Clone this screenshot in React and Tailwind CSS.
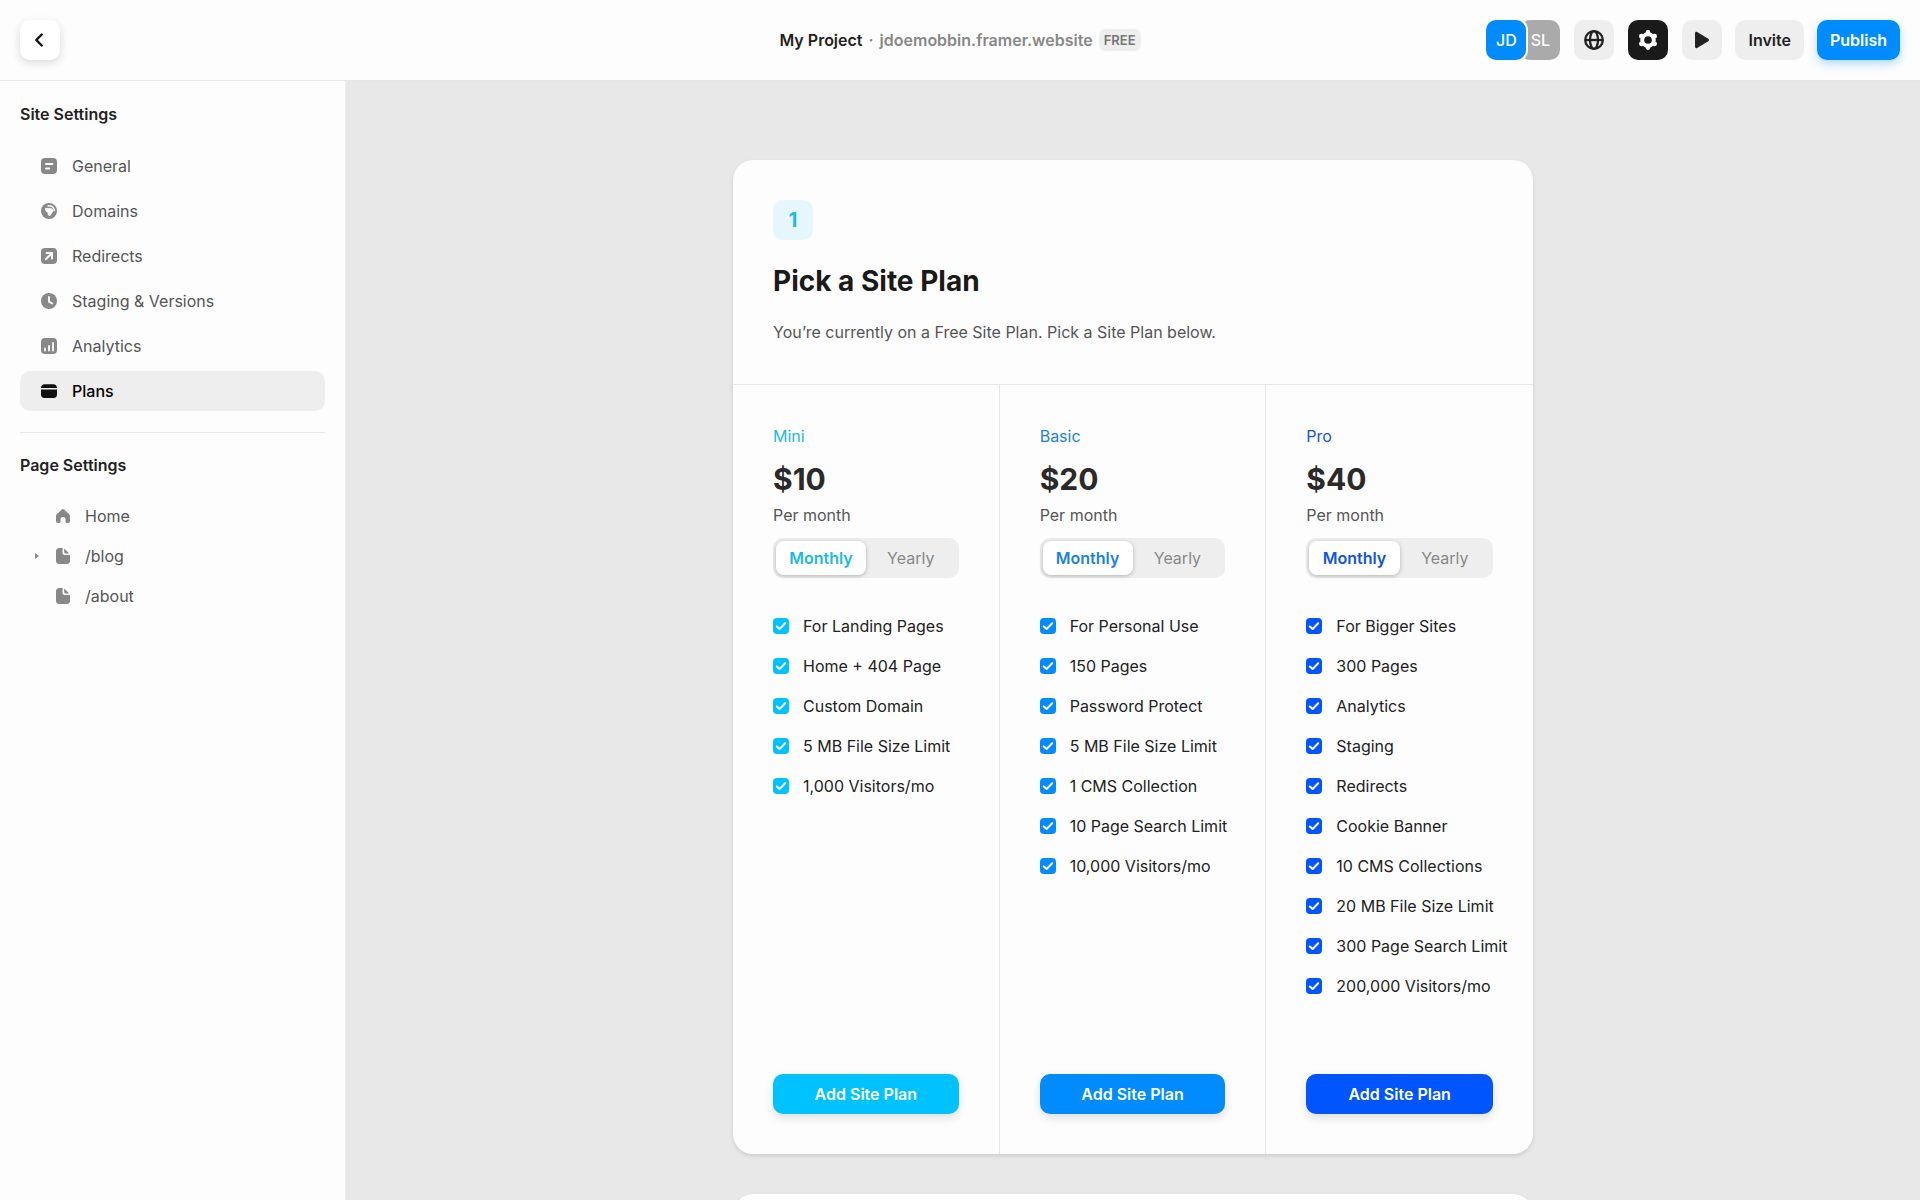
import React, { useState } from 'react';
import clsx from 'clsx';

const plans = [
    {
        name: 'Mini',
        price: '$10',
        text: 'text-[#1fb8e8]',
        fill: 'bg-[#00c2ff]',
        features: ['For Landing Pages', 'Home + 404 Page', 'Custom Domain', '5 MB File Size Limit', '1,000 Visitors/mo'],
    },
    {
        name: 'Basic',
        price: '$20',
        text: 'text-[#1a82e0]',
        fill: 'bg-[#008cff]',
        features: [
            'For Personal Use',
            '150 Pages',
            'Password Protect',
            '5 MB File Size Limit',
            '1 CMS Collection',
            '10 Page Search Limit',
            '10,000 Visitors/mo',
        ],
    },
    {
        name: 'Pro',
        price: '$40',
        text: 'text-[#1355d6]',
        fill: 'bg-[#0055ff]',
        features: [
            'For Bigger Sites',
            '300 Pages',
            'Analytics',
            'Staging',
            'Redirects',
            'Cookie Banner',
            '10 CMS Collections',
            '20 MB File Size Limit',
            '300 Page Search Limit',
            '200,000 Visitors/mo',
        ],
    },
];

function GeneralIcon() {
    return (
        <svg viewBox="0 0 16 16" className="size-4">
            <rect width="16" height="16" rx="4" fill="currentColor" />
            <path d="M5 6h6.400M5 10.500h3.200" stroke="#fdfdfd" strokeWidth="2" strokeLinecap="round" />
        </svg>
    );
}

function DomainsIcon() {
    return (
        <svg viewBox="0 0 16 16" className="size-4">
            <circle cx="8" cy="8" r="8" fill="currentColor" />
            <path d="M4.500 5.200 6 5.600h4.500l1.800 1.900-1 1.600-2.500 3.700-1.400-.8-.4-2.400-2.300-1.800z" fill="#fdfdfd" stroke="#fdfdfd" strokeWidth=".8" strokeLinejoin="round" />
            <path d="M7 3h3.400l2 1.800 1.200 2.600" fill="none" stroke="#fdfdfd" strokeWidth="1.400" strokeLinecap="round" strokeLinejoin="round" />
        </svg>
    );
}

function RedirectsIcon() {
    return (
        <svg viewBox="0 0 16 16" className="size-4">
            <rect width="16" height="16" rx="4" fill="currentColor" />
            <path d="M4.800 11.200 11 5M5.600 5H11v5.600" fill="none" stroke="#fdfdfd" strokeWidth="2" strokeLinecap="round" strokeLinejoin="round" />
        </svg>
    );
}

function ClockIcon() {
    return (
        <svg viewBox="0 0 16 16" className="size-4">
            <circle cx="8" cy="8" r="8" fill="currentColor" />
            <path d="M8 4v4.600l3 1.800" fill="none" stroke="#fdfdfd" strokeWidth="1.900" strokeLinecap="round" strokeLinejoin="round" />
        </svg>
    );
}

function AnalyticsIcon() {
    return (
        <svg viewBox="0 0 16 16" className="size-4">
            <rect width="16" height="16" rx="4" fill="currentColor" />
            <path d="M4 12.600v-2.200M8 12.600V8M12 12.600V5" stroke="#fdfdfd" strokeWidth="1.800" strokeLinecap="round" />
        </svg>
    );
}

function PlansIcon() {
    return (
        <svg viewBox="0 0 16 16" className="size-4">
            <path d="M0 5a3.400 3.400 0 0 1 3.400-3.700h9.200A3.400 3.400 0 0 1 16 5zM0 6.500h16v5a3.400 3.400 0 0 1-3.400 3.400H3.400A3.400 3.400 0 0 1 0 11.500z" fill="currentColor" />
        </svg>
    );
}

function HomeIcon() {
    return (
        <svg viewBox="0 0 14 16" className="h-4 w-[14px]">
            <path
                d="M5.900 1.500a1.700 1.700 0 0 1 2.200 0l4.600 4.200c.8.700 1.300 1.700 1.300 2.800V13a2 2 0 0 1-2 2h-1a1.500 1.500 0 0 1-1.500-1.500v-2a2.500 2.500 0 0 0-5 0v2A1.500 1.500 0 0 1 3 15H2a2 2 0 0 1-2-2V8.500c0-1.100.5-2.100 1.300-2.800z"
                fill="currentColor"
            />
        </svg>
    );
}

function FileIcon() {
    return (
        <svg viewBox="0 0 14 16" className="h-4 w-[14px]">
            <path d="M3.500 0H6.500v4.500a2.500 2.500 0 0 0 2.500 2.500H14v5.500a3.500 3.500 0 0 1-3.500 3.500h-7A3.500 3.500 0 0 1 0 12.500v-9A3.500 3.500 0 0 1 3.500 0z" fill="currentColor" />
            <path d="M8.200.6 13.200 5.400H9.500a1.300 1.300 0 0 1-1.300-1.300z" fill="currentColor" />
        </svg>
    );
}

function GlobeIcon() {
    return (
        <svg viewBox="0 0 20 20" className="size-5" fill="none" stroke="currentColor" strokeWidth="2.300">
            <circle cx="10" cy="10" r="8.800" />
            <ellipse cx="10" cy="10" rx="4" ry="8.800" />
            <path d="M1 10h18" />
        </svg>
    );
}

function GearIcon() {
    return (
        <svg viewBox="0 0 20 20" className="size-5" fill="none" stroke="currentColor">
            <circle cx="10" cy="10" r="5.800" strokeWidth="4" />
            <path d="M10 2.400v.1M10 17.500v.1M3.400 6.200h.1M3.400 13.800h.1M16.500 6.200h.1M16.500 13.800h.1" strokeWidth="4.800" strokeLinecap="round" />
        </svg>
    );
}

function PlayIcon() {
    return (
        <svg viewBox="0 0 16 18" className="h-[18px] w-4">
            <path d="M1 2.200C1 1.100 2.200.5 3.100 1.100l11.200 6.700a1.400 1.400 0 0 1 0 2.400L3.100 16.900C2.200 17.500 1 16.900 1 15.800z" fill="currentColor" />
        </svg>
    );
}

const siteLinks = [
    { label: 'General', Icon: GeneralIcon },
    { label: 'Domains', Icon: DomainsIcon },
    { label: 'Redirects', Icon: RedirectsIcon },
    { label: 'Staging & Versions', Icon: ClockIcon },
    { label: 'Analytics', Icon: AnalyticsIcon },
    { label: 'Plans', Icon: PlansIcon, active: true },
];

const pageLinks = [
    { label: 'Home', Icon: HomeIcon },
    { label: '/blog', Icon: FileIcon, expandable: true },
    { label: '/about', Icon: FileIcon },
];

function Header() {
    return (
        <header className="grid shrink-0 grid-cols-[1fr_auto_1fr] items-center border-b border-[#e6e6e6] p-5">
            <button
                aria-label="Back"
                className="flex size-10 items-center justify-center rounded-[10px] bg-white pr-[2px] text-[#111] shadow-[0_3px_10px_rgba(0,0,0,0.14)]"
            >
                <svg viewBox="0 0 8 14" className="h-[14px] w-2" fill="none" stroke="currentColor" strokeWidth="2.400" strokeLinecap="round" strokeLinejoin="round">
                    <path d="M6.700 1.500 1.300 7l5.400 5.500" />
                </svg>
            </button>

            <div className="flex items-center font-semibold">
                <h1 className="text-[#222]">My Project</h1>
                <span className="mx-[6px] text-[#888]">·</span>
                <a href="#site" className="text-[#888]">jdoemobbin.framer.website</a>
                <span className="ml-[6px] rounded-md bg-[#eee] px-[5px] text-[13px] leading-[22px] text-[#777]">FREE</span>
            </div>

            <div className="flex items-center justify-end gap-[13px] font-semibold">
                <div className="flex gap-[14px]">
                    <div className="flex font-medium text-white">
                        <span className="relative z-10 flex size-10 items-center justify-center rounded-[10px] bg-[#008cff] ring-2 ring-[#fdfdfd]">JD</span>
                        <span className="-ml-[6px] flex size-10 items-center justify-center rounded-[10px] bg-[#aaa]">SL</span>
                    </div>
                    <button aria-label="Language" className="flex size-10 items-center justify-center rounded-[10px] bg-[#eee] text-[#222]">
                        <GlobeIcon />
                    </button>
                    <button aria-label="Settings" className="flex size-10 items-center justify-center rounded-[10px] bg-[#1a1a1a] text-white">
                        <GearIcon />
                    </button>
                    <button aria-label="Preview" className="flex size-10 items-center justify-center rounded-[10px] bg-[#eee] text-[#222]">
                        <PlayIcon />
                    </button>
                </div>
                <button className="h-10 rounded-[10px] bg-[#eee] px-[13px] text-[#222]">Invite</button>
                <button className="h-10 rounded-[10px] bg-[#008cff] px-[13px] text-white shadow-[0_4px_10px_rgba(0,140,255,0.3)]">Publish</button>
            </div>
        </header>
    );
}

function Sidebar() {
    return (
        <aside className="w-[346px] shrink-0 border-r border-[#eee] px-5 pt-[21px]">
            <h2 className="leading-6 font-semibold text-[#222]">Site Settings</h2>
            <nav className="mt-5 flex flex-col gap-[5px]">
                {siteLinks.map(({ label, Icon, active }) => (
                    <a
                        key={label}
                        href={`#${label}`}
                        className={clsx(
                            'flex h-10 items-center gap-[15px] rounded-[10px] px-[21px]',
                            active ? 'bg-[#eee] font-medium text-[#111]' : 'text-[#888]'
                        )}
                    >
                        <Icon />
                        <span className={active ? 'text-black' : 'text-[#555]'}>{label}</span>
                    </a>
                ))}
            </nav>
            <hr className="mt-[21px] border-[#e6e6e6]" />
            <h2 className="mt-5 leading-6 font-semibold text-[#222]">Page Settings</h2>
            <nav className="mt-[19px] flex flex-col">
                {pageLinks.map(({ label, Icon, expandable }) => (
                    <a key={label} href={`#${label}`} className="flex h-10 items-center text-[#888]">
                        <span className="flex w-9 shrink-0 items-center pl-[15px]">
                            {expandable && (
                                <svg viewBox="0 0 4 6" className="h-[6px] w-1">
                                    <path d="M0 0v6l4-3z" fill="currentColor" />
                                </svg>
                            )}
                        </span>
                        <Icon />
                        <span className="ml-[15px] text-[#555]">{label}</span>
                    </a>
                ))}
            </nav>
        </aside>
    );
}

function Feature({ label, fill }) {
    return (
        <li>
            <label className="flex h-10 items-center gap-[14px] whitespace-nowrap text-[#222]">
                <span className="relative size-4 shrink-0">
                    <input type="checkbox" defaultChecked className={clsx('block size-4 appearance-none rounded-[4px]', fill)} />
                    <svg viewBox="0 0 16 16" className="pointer-events-none absolute inset-0 size-4" fill="none" stroke="#fff" strokeWidth="2" strokeLinecap="round" strokeLinejoin="round">
                        <path d="M3.800 8.400 6.600 11l5.600-5.700" />
                    </svg>
                </span>
                {label}
            </label>
        </li>
    );
}

function Plan({ plan }) {
    const [period, setPeriod] = useState('Monthly');

    return (
        <section className="flex flex-col border-[#e6e6e6] px-10 pt-[39px] pb-10 not-last:border-r">
            <h3 className={clsx('leading-6', plan.text)}>{plan.name}</h3>
            <p className="mt-[13px] text-[30px] leading-9 font-bold text-[#2a2a2a]">{plan.price}</p>
            <p className="mt-[6px] leading-6 text-[#555]">Per month</p>
            <div className="mt-[11px] flex h-10 rounded-[10px] bg-[#eee] p-[3px]">
                {['Monthly', 'Yearly'].map((p) => (
                    <button
                        key={p}
                        aria-pressed={period === p}
                        onClick={() => setPeriod(p)}
                        className={clsx(
                            'flex-1 rounded-lg',
                            period === p
                                ? clsx('bg-white font-semibold shadow-[0_1px_4px_rgba(0,0,0,0.25)]', plan.text)
                                : 'text-[#888]'
                        )}
                    >
                        {p}
                    </button>
                ))}
            </div>
            <ul className="mt-7 mb-[68px]">
                {plan.features.map((f) => (
                    <Feature key={f} label={f} fill={plan.fill} />
                ))}
            </ul>
            <button className={clsx('mt-auto h-10 rounded-[10px] font-semibold text-white shadow-[0_4px_10px_rgba(0,0,0,0.12)]', plan.fill)}>
                Add Site Plan
            </button>
        </section>
    );
}

export default function App() {
    return (
        <div className="flex h-screen flex-col overflow-hidden bg-[#fdfdfd] font-['Inter',sans-serif] text-base">
            <Header />
            <div className="flex min-h-0 flex-1">
                <Sidebar />
                <main className="flex-1 overflow-hidden bg-[#e8e8e8] px-10 pt-[79px]">
                    <div className="mx-auto flex max-w-[800px] flex-col gap-10">
                        <div className="rounded-[20px] bg-[#fdfdfd] shadow-[0_2px_4px_rgba(0,0,0,0.12)]">
                            <div className="border-b border-[#e6e6e6] p-10">
                                <span className="flex size-10 items-center justify-center rounded-[10px] bg-[#e5f6fd] text-xl font-bold text-[#1fb8e8]">1</span>
                                <h2 className="mt-[23px] text-[28px] leading-9 font-bold text-[#1a1a1a]">Pick a Site Plan</h2>
                                <p className="mt-[21px] leading-6 text-[#555]">You’re currently on a Free Site Plan. Pick a Site Plan below.</p>
                            </div>
                            <div className="grid grid-cols-3">
                                {plans.map((plan) => (
                                    <Plan key={plan.name} plan={plan} />
                                ))}
                            </div>
                        </div>
                        {/* Next step */}
                        <div className="h-40 rounded-[20px] bg-[#fdfdfd] shadow-[0_2px_4px_rgba(0,0,0,0.12)]" />
                    </div>
                </main>
            </div>
        </div>
    );
}
